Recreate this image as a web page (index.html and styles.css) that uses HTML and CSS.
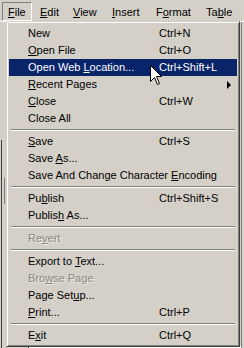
FILE: index.html
```html
<!DOCTYPE html>
<html lang="en">
<head>
  <meta charset="UTF-8">
  <title>File menu</title>
<link rel="stylesheet" href="styles.css">
</head>
<body>
  <div class="window">
    <div class="menubar">
      <div class="bar-item pressed"><u>F</u>ile</div>
      <div class="bar-item"><u>E</u>dit</div>
      <div class="bar-item"><u>V</u>iew</div>
      <div class="bar-item"><u>I</u>nsert</div>
      <div class="bar-item">F<u>o</u>rmat</div>
      <div class="bar-item">Ta<u>b</u>le</div>
    </div>

    <!-- stuff behind the open menu -->
    <div class="workspace">
      <div class="side-panel">
        <div class="side-mark"></div>
      </div>
      <div class="doc-area"></div>
      <div class="right-edge"></div>
    </div>

    <div class="dropdown">
      <div class="item"><span>New</span><span>Ctrl+N</span></div>
      <div class="item"><span><u>O</u>pen File</span><span>Ctrl+O</span></div>
      <div class="item active"><span>Open Web <u>L</u>ocation...</span><span>Ctrl+Shift+L</span></div>
      <div class="item"><span><u>R</u>ecent Pages</span><span></span><i class="arrow"></i></div>
      <div class="item"><span><u>C</u>lose</span><span>Ctrl+W</span></div>
      <div class="item"><span>Close All</span><span></span></div>
      <div class="sep"></div>
      <div class="item"><span><u>S</u>ave</span><span>Ctrl+S</span></div>
      <div class="item"><span>Save <u>A</u>s...</span><span></span></div>
      <div class="item"><span>Save And Change Character <u>E</u>ncoding</span><span></span></div>
      <div class="sep"></div>
      <div class="item"><span>Pu<u>b</u>lish</span><span>Ctrl+Shift+S</span></div>
      <div class="item"><span>Publis<u>h</u> As...</span><span></span></div>
      <div class="sep"></div>
      <div class="item disabled"><span>Re<u>v</u>ert</span><span></span></div>
      <div class="sep"></div>
      <div class="item"><span>Export to <u>T</u>ext...</span><span></span></div>
      <div class="item disabled"><span>Bro<u>w</u>se Page</span><span></span></div>
      <div class="item"><span>Page Set<u>u</u>p...</span><span></span></div>
      <div class="item"><span><u>P</u>rint...</span><span>Ctrl+P</span></div>
      <div class="sep"></div>
      <div class="item"><span>E<u>x</u>it</span><span>Ctrl+Q</span></div>
    </div>

    <svg class="cursor" width="13" height="21" viewBox="0 0 13 21">
      <path d="M0.5 0.5 L0.5 16.5 L4.5 12.5 L7.5 19.5 L9.5 18.5 L6.5 11.5 L11.5 11.5 Z" fill="#fff" stroke="#000" stroke-width="1"/>
    </svg>
  </div>
</body>
</html>
```

FILE: styles.css
```css
body {
  margin: 0;
  background-color: #d4d0c8;
  font-family: "Liberation Sans", Arial, sans-serif;
  font-size: 11px;
  color: #000;
}

.window {
  position: relative;
  width: 244px;
  height: 348px;
  overflow: hidden;
}

/* top menu bar */
.menubar {
  display: grid;
  grid-template-columns: 32px 33px 39px 44px 50px auto;
  height: 22px;
  padding: 2px 0 0 2px;
  border-bottom: 1px solid #fff;
  box-sizing: border-box;
}

.bar-item {
  height: 19px;
  line-height: 18px;
  padding-left: 5px;
  border: 1px solid transparent;
  box-sizing: border-box;
  white-space: nowrap;
}

.bar-item.pressed {
  border-color: #808080 #fff #fff #808080;
  width: 30px;
}

/* whatever lies under the menu */
.workspace {
  display: flex;
  height: 326px;
}

.side-panel {
  width: 24px;
  margin: 118px 0 0 1px;
  padding: 38px 0 0 2px;
  border-left: 1px solid #404040;
}

.side-mark {
  width: 1px;
  height: 26px;
  background-color: #808080;
}

.doc-area {
  flex: 1;
  margin-top: 324px;
  background-color: #fff;
  border-left: 1px solid #404040;
}

.right-edge {
  width: 2px;
  border-left: 1px solid #808080;
}

/* the dropdown */
.dropdown {
  position: absolute;
  left: 6px;
  top: 21px;
  width: 234px;
  box-sizing: border-box;
  padding: 3px 2px 2px 2px;
  background-color: #d4d0c8;
  border: 1px solid;
  border-color: #d4d0c8 #404040 #404040 #d4d0c8;
  box-shadow: inset 1px 1px 0 #fff, inset -1px -1px 0 #808080;
}

.item {
  position: relative;
  display: grid;
  grid-template-columns: 131px auto;
  height: 17px;
  line-height: 17px;
  padding-left: 19px;
  white-space: nowrap;
}

.item.active {
  background-color: #0a246a;
  color: #fff;
}

.item.disabled {
  color: #8a8884;
  text-shadow: 1px 1px 0 #eceae6;
}

.arrow {
  position: absolute;
  right: 6px;
  top: 5px;
  width: 0;
  height: 0;
  border: 4px solid transparent;
  border-left: 4px solid #000;
  border-right: 0;
}

.sep {
  height: 2px;
  margin: 2px 2px;
  border-top: 1px solid #808080;
  border-bottom: 1px solid #fff;
  box-sizing: border-box;
}

.cursor {
  position: absolute;
  left: 150px;
  top: 65px;
}
```
